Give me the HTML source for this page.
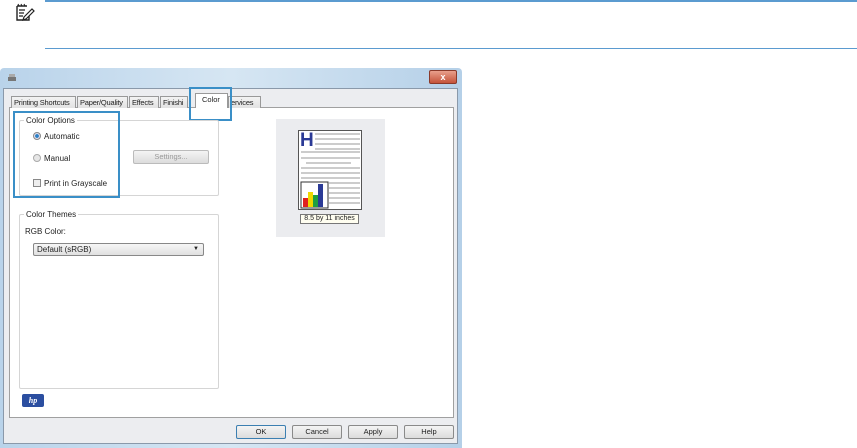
<!DOCTYPE html>
<html><head><meta charset="utf-8"><style>
*{margin:0;padding:0;box-sizing:border-box}
body{width:857px;height:448px;background:#fff;position:relative;overflow:hidden;font-family:"Liberation Sans",sans-serif;font-size:8px;color:#222}
.a{position:absolute;white-space:nowrap}
.hl{border:2px solid #3a8fc7}
.btn{position:absolute;height:14px;border:1px solid #8a8a8a;border-radius:2px;background:linear-gradient(#f4f4f4,#dcdcdc);text-align:center;line-height:12px;font-size:7.5px}
.tab{position:absolute;top:96px;height:12px;border:1px solid #999;border-bottom:none;background:linear-gradient(#f3f3f3,#e2e2e2);font-size:7.5px;line-height:11px;padding:0 2px;white-space:nowrap;overflow:hidden;letter-spacing:-0.2px}
</style></head><body>
<div class="a" style="left:45px;top:0;width:812px;height:2px;background:#5b9bd0"></div>
<div class="a" style="left:45px;top:48px;width:812px;height:1px;background:#5b9bd0"></div>
<svg class="a" style="left:14px;top:2px" width="22" height="22" viewBox="0 0 22 22"><path d="M3 4h10M3 4v14h12v-6" fill="none" stroke="#222" stroke-width="1.4"/><path d="M4 2l1 2M7 2l1 2M10 2l1 2" stroke="#222"/><path d="M5 8h6M5 11h5M5 14h4" stroke="#222" stroke-width="1.2"/><path d="M10 15l8-8 2 2-8 8-3 1z" fill="#fff" stroke="#222" stroke-width="1.2"/></svg>

<div class="a" style="left:0;top:68px;width:462px;height:380px;background:linear-gradient(90deg,#b9d3ea,#d6e6f3 50%,#b5d0e8);border-radius:4px 4px 0 0"></div>
<svg class="a" style="left:7px;top:74px" width="10" height="9"><rect x="1" y="3" width="8" height="4" fill="#777"/><rect x="2" y="0" width="6" height="3" fill="#aaa"/></svg>
<div class="a" style="left:429px;top:70px;width:28px;height:14px;background:linear-gradient(#e8a08c,#c4533a);border:1px solid #8a3a2a;border-radius:2px;color:#fff;text-align:center;font-size:9px;line-height:12px;font-weight:bold">x</div>
<div class="a" style="left:3px;top:88px;width:455px;height:356px;background:#ecedf0;border:1px solid #8a99aa"></div>
<div class="a" style="left:9px;top:107px;width:445px;height:311px;background:#fff;border:1px solid #a0a0a0"></div>
<div class="tab" style="left:11px;width:65px">Printing Shortcuts</div>
<div class="tab" style="left:77px;width:51px">Paper/Quality</div>
<div class="tab" style="left:129px;width:30px">Effects</div>
<div class="tab" style="left:160px;width:28px">Finishi</div>
<div class="tab" style="left:228px;width:33px">ervices</div>
<div class="a" style="left:195px;top:93px;width:33px;height:15px;background:#fff;border:1px solid #999;border-bottom:none;font-size:7.5px;line-height:12px;padding-left:6px">Color</div>
<div class="a hl" style="left:189px;top:87px;width:43px;height:34px"></div>

<div class="a" style="left:19px;top:120px;width:200px;height:76px;border:1px solid #d5d5d5;border-radius:2px"></div>
<div class="a" style="left:24px;top:116px;background:#fff;padding:0 2px">Color Options</div>
<div class="a" style="left:33px;top:132px;width:8px;height:8px;border-radius:50%;border:1px solid #888;background:radial-gradient(#2a7fc4 40%,#dde 50%)"></div>
<div class="a" style="left:44px;top:132px">Automatic</div>
<div class="a" style="left:33px;top:154px;width:8px;height:8px;border-radius:50%;border:1px solid #aaa;background:#e6e6e6"></div>
<div class="a" style="left:44px;top:154px">Manual</div>
<div class="a" style="left:33px;top:179px;width:8px;height:8px;border:1px solid #888;background:#eee"></div>
<div class="a" style="left:44px;top:179px">Print in Grayscale</div>
<div class="btn" style="left:133px;top:150px;width:76px;color:#999;border-color:#bbb">Settings...</div>
<div class="a hl" style="left:13px;top:111px;width:107px;height:87px"></div>

<div class="a" style="left:19px;top:214px;width:200px;height:175px;border:1px solid #d5d5d5;border-radius:2px"></div>
<div class="a" style="left:24px;top:210px;background:#fff;padding:0 2px">Color Themes</div>
<div class="a" style="left:25px;top:227px">RGB Color:</div>
<div class="a" style="left:33px;top:243px;width:171px;height:13px;border:1px solid #888;border-radius:2px;background:linear-gradient(#f6f6f6,#e0e0e0);padding-left:3px;line-height:11px">Default (sRGB)<span style="position:absolute;right:4px;top:0;font-size:6px">▼</span></div>

<div class="a" style="left:276px;top:119px;width:109px;height:118px;background:#ebecef"></div>
<div class="a" style="left:298px;top:130px;width:64px;height:80px;background:#fff;border:1px solid #555"></div>
<div class="a" style="left:300px;top:132px;font:900 19px 'Liberation Sans',sans-serif;color:#2b3a96;line-height:18px">H</div>
<svg class="a" style="left:299px;top:131px" width="62" height="78"><g stroke="#999" stroke-width="1"><path d="M16 3h45M16 8h45M16 13h45M16 18h45M2 21h59M2 27h59M7 32h45M2 37h59M2 42h59M2 47h59M30 52h31M30 57h31M30 62h31M30 67h31M30 72h31"/></g><rect x="2" y="51" width="27" height="26" fill="#fff" stroke="#333"/><rect x="4" y="67" width="5" height="9" fill="#e02020"/><rect x="9" y="61" width="5" height="15" fill="#f0d800"/><rect x="14" y="64" width="5" height="12" fill="#20a040"/><rect x="19" y="53" width="5" height="23" fill="#2b3a96"/></svg>
<div class="a" style="left:300px;top:214px;width:59px;height:10px;border:1px solid #777;background:#fffef0;font-size:7px;line-height:8px;text-align:center">8.5 by 11 inches</div>

<div class="a" style="left:22px;top:394px;width:22px;height:13px;background:#2b4ea0;border-radius:2px;color:#fff;font:italic bold 8px 'Liberation Serif',serif;text-align:center;line-height:13px">hp</div>

<div class="btn" style="left:236px;top:425px;width:50px;border-color:#3c7fb1">OK</div>
<div class="btn" style="left:292px;top:425px;width:50px">Cancel</div>
<div class="btn" style="left:348px;top:425px;width:50px">Apply</div>
<div class="btn" style="left:404px;top:425px;width:50px">Help</div>
</body></html>
